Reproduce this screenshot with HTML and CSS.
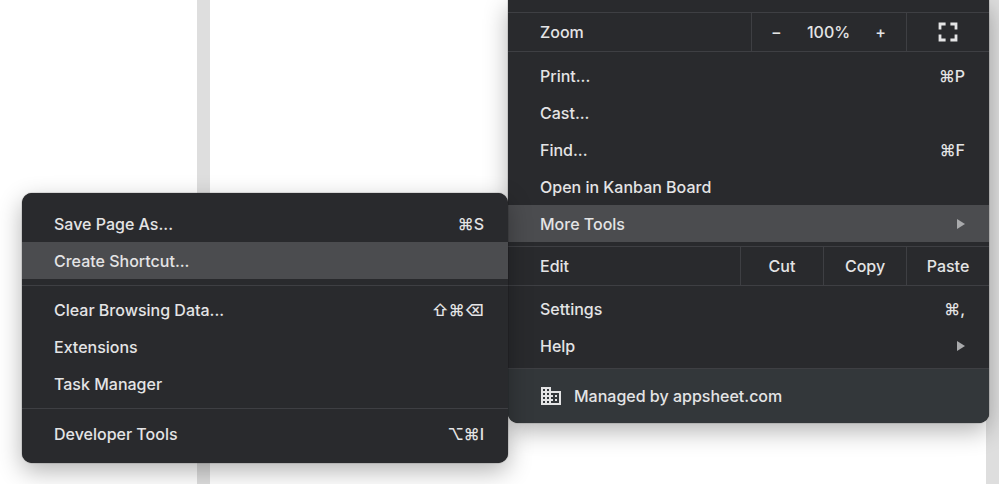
FILE: index.html
```html
<!DOCTYPE html>
<html lang="en">
<head>
  <meta charset="UTF-8" />
  <title>Browser Menu</title>
  <meta name="viewport" content="width=device-width, initial-scale=1.0" />
  <link rel="stylesheet" href="styles.css">
</head>
<body>
  <div class="page">
    <div class="pane side"></div>
    <div class="pane main"></div>
  </div>

  <div class="menus">
    <div class="menu submenu">
      <button class="item"><span>Save Page As...</span><span class="keys">⌘S</span></button>
      <button class="item selected"><span>Create Shortcut...</span></button>
      <hr>
      <button class="item"><span>Clear Browsing Data...</span><span class="keys">⇧⌘⌫</span></button>
      <button class="item"><span>Extensions</span></button>
      <button class="item"><span>Task Manager</span></button>
      <hr>
      <button class="item"><span>Developer Tools</span><span class="keys">⌥⌘I</span></button>
    </div>

    <div class="menu app-menu">
      <div class="bar">
        <span class="label">Zoom</span>
        <div class="cell zoom">
          <button aria-label="Zoom out">−</button>
          <span>100%</span>
          <button aria-label="Zoom in">+</button>
        </div>
        <button class="cell" aria-label="Full screen">
          <svg width="20" height="20" viewBox="0 0 20 20" fill="none" stroke="currentColor" stroke-width="2.8">
            <path d="M2 7.4V2H7.6M12.4 2H18V7.4M18 12.6V18H12.4M7.6 18H2V12.6" />
          </svg>
        </button>
      </div>

      <div class="group">
        <button class="item"><span>Print...</span><span class="keys">⌘P</span></button>
        <button class="item"><span>Cast...</span></button>
        <button class="item"><span>Find...</span><span class="keys">⌘F</span></button>
        <button class="item"><span>Open in Kanban Board</span></button>
        <button class="item selected"><span>More Tools</span><span class="arrow"></span></button>
      </div>

      <div class="bar">
        <span class="label">Edit</span>
        <button class="cell">Cut</button>
        <button class="cell">Copy</button>
        <button class="cell">Paste</button>
      </div>

      <div class="group last">
        <button class="item"><span>Settings</span><span class="keys">⌘,</span></button>
        <button class="item"><span>Help</span><span class="arrow"></span></button>
      </div>

      <button class="managed">
        <svg width="22" height="20" viewBox="0 0 22 20" fill="currentColor">
          <path fill-rule="evenodd" d="M1 1h10v4h10v14H1zM3 3v2h2V3zM7 3v2h2V3zM3 7v2h2V7zM7 7v2h2V7zM3 11v2h2v-2zM7 11v2h2v-2zM3 15v2h2v-2zM7 15v2h2v-2zM11 7v2h2v2h-2v2h2v2h-2v2h8V7zM15 9h2v2h-2zM15 13h2v2h-2z" />
        </svg>
        <span>Managed by appsheet.com</span>
      </button>
    </div>
  </div>
</body>
</html>
```
FILE: styles.css
```css
* { box-sizing: border-box; }
body { margin: 0; background: #fff; color: #e4e4e5; font-family: Inter, "DejaVu Sans", sans-serif; font-size: 16px; font-weight: 500; line-height: 20px; overflow: hidden; }
button { font: inherit; color: inherit; background: none; border: none; padding: 0; cursor: pointer; }

.page { display: flex; height: 100vh; }
.pane { border-right: 13px solid #dedede; }
.side { flex: 0 0 210px; }
.main { flex: 1; }

.menus { position: absolute; top: 0; left: 22px; right: 10px; display: flex; align-items: flex-start; }
.menu { background: #292a2d; box-shadow: 0 0 1px #000, 0 8px 24px rgba(0, 0, 0, 0.3); }
.submenu { flex: 1 1 486px; position: relative; z-index: 1; margin-top: 193px; padding: 12px 0 11px; border-radius: 10px; }
.app-menu { flex: 1 1 481px; padding-top: 12px; border-radius: 0 0 10px 10px; overflow: hidden; }

.item { display: flex; justify-content: space-between; align-items: center; width: 100%; height: 37px; padding: 0 24px 0 32px; text-align: left; }
.selected { background: #4b4c4f; }
.arrow { border-left: 8px solid #a9aaac; border-top: 5px solid transparent; border-bottom: 5px solid transparent; }
hr { margin: 6px 0 5px; border: none; border-top: 1px solid #3e3f43; }
hr:last-of-type { margin-bottom: 6px; }

.group { padding: 5px 0 4px; }
.last { padding: 4px 0; }
.bar { display: flex; align-items: stretch; height: 40px; border-top: 1px solid #3e3f43; border-bottom: 1px solid #3e3f43; }
.label { flex: 1; align-self: center; padding-left: 32px; }
.cell { width: 83px; border-left: 1px solid #3e3f43; display: flex; align-items: center; justify-content: center; }
.zoom { width: 155px; justify-content: space-between; padding: 0 20px 0 19px; }

.managed { display: flex; align-items: center; gap: 12px; width: 100%; height: 55px; padding: 0 32px; background: #33373a; border-top: 1px solid #3e3f43; }
```
